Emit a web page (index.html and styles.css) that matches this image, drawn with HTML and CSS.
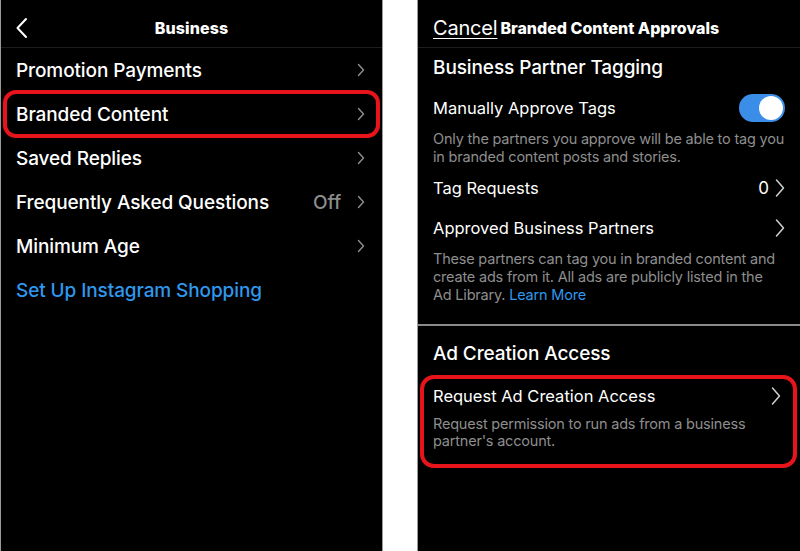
FILE: index.html
```html
<!DOCTYPE html>
<html lang="en">
<head>
  <meta charset="UTF-8">
  <title>Business / Branded Content Approvals</title>
  <link rel="stylesheet" href="styles.css">
</head>
<body>
  <div class="screens">
    <!-- Business settings -->
    <div class="phone">
      <div class="topbar">
        <svg class="back" width="14" height="22" viewBox="0 0 14 22"><path d="M11 2 L2.5 11 L11 20" fill="none" stroke="#fff" stroke-width="2" stroke-linecap="round" stroke-linejoin="round"/></svg>
        <span class="title">Business</span>
      </div>
      <div class="menu">
        <div class="menu-item"><span>Promotion Payments</span><svg class="chev" width="8" height="14" viewBox="0 0 8 14"><path d="M1.5 1.5 L6.5 7 L1.5 12.5"/></svg></div>
        <div class="menu-item highlight"><span>Branded Content</span><svg class="chev" width="8" height="14" viewBox="0 0 8 14"><path d="M1.5 1.5 L6.5 7 L1.5 12.5"/></svg></div>
        <div class="menu-item"><span>Saved Replies</span><svg class="chev" width="8" height="14" viewBox="0 0 8 14"><path d="M1.5 1.5 L6.5 7 L1.5 12.5"/></svg></div>
        <div class="menu-item"><span>Frequently Asked Questions</span><span class="right"><span class="value">Off</span><svg class="chev" width="8" height="14" viewBox="0 0 8 14"><path d="M1.5 1.5 L6.5 7 L1.5 12.5"/></svg></span></div>
        <div class="menu-item"><span>Minimum Age</span><svg class="chev" width="8" height="14" viewBox="0 0 8 14"><path d="M1.5 1.5 L6.5 7 L1.5 12.5"/></svg></div>
        <div class="menu-item link">Set Up Instagram Shopping</div>
      </div>
    </div>

    <!-- Branded content approvals -->
    <div class="phone">
      <div class="topbar left">
        <span class="cancel">Cancel</span>
        <span class="title small">Branded Content Approvals</span>
      </div>
      <div class="section">
        <h2>Business Partner Tagging</h2>
        <div class="row">
          <span>Manually Approve Tags</span>
          <span class="toggle"><span class="knob"></span></span>
        </div>
        <p class="hint">Only the partners you approve will be able to tag you in branded content posts and stories.</p>
        <div class="row">
          <span>Tag Requests</span>
          <span class="right"><span class="count">0</span><svg class="chev big" width="10" height="20" viewBox="0 0 10 20"><path d="M1.5 2 L8.5 10 L1.5 18"/></svg></span>
        </div>
        <div class="row">
          <span>Approved Business Partners</span>
          <svg class="chev big" width="10" height="20" viewBox="0 0 10 20"><path d="M1.5 2 L8.5 10 L1.5 18"/></svg>
        </div>
        <p class="hint last">These partners can tag you in branded content and create ads from it. All ads are publicly listed in the Ad Library. <span class="blue">Learn More</span></p>
      </div>
      <div class="section second">
        <h2>Ad Creation Access</h2>
        <div class="boxed">
          <div class="row short">
            <span>Request Ad Creation Access</span>
            <svg class="chev big" width="10" height="20" viewBox="0 0 10 20"><path d="M1.5 2 L8.5 10 L1.5 18"/></svg>
          </div>
          <p class="hint">Request permission to run ads from a business partner's account.</p>
        </div>
      </div>
    </div>
  </div>
</body>
</html>
```

FILE: styles.css
```css
* {
  box-sizing: border-box;
}

body {
  margin: 0;
  background: #fff;
  font-family: Inter, "Liberation Sans", Arial, sans-serif;
  color: #fff;
}

.screens {
  display: flex;
  justify-content: space-between;
  height: 551px;
}

.phone {
  width: 383px;
  background: #000;
  border-left: 1px solid #9a9a9a;
  border-right: 1px solid #9a9a9a;
}

.phone:last-child {
  width: 383px;
  border-right: none;
}

/* top bar */
.topbar {
  height: 48px;
  padding-top: 8px;
  border-bottom: 1px solid #1c1c1c;
  display: flex;
  align-items: center;
  justify-content: center;
  position: relative;
}

.topbar .back {
  position: absolute;
  left: 14px;
  top: 17px;
}

.title {
  font-weight: 800;
  font-size: 16px;
  letter-spacing: 0.1px;
}

.topbar.left {
  justify-content: flex-start;
  padding-left: 15px;
  gap: 3px;
}

.cancel {
  font-size: 20px;
  text-decoration: underline;
  text-underline-offset: 3px;
  text-decoration-thickness: 1px;
  letter-spacing: -0.2px;
}

.title.small {
  font-size: 16px;
  letter-spacing: 0;
}

/* chevrons */
.chev {
  fill: none;
  stroke: #8f8f8f;
  stroke-width: 1.4;
  stroke-linecap: round;
  stroke-linejoin: round;
}

.chev.big {
  stroke: #cfcfcf;
  stroke-width: 1.5;
}

/* left menu */
.menu-item {
  height: 44px;
  padding: 0 17px 0 15px;
  display: flex;
  align-items: center;
  justify-content: space-between;
  font-size: 19px;
  font-weight: 500;
  letter-spacing: -0.1px;
}

.menu-item.highlight {
  border: 4px solid #e8141b;
  border-radius: 13px;
  margin: -2px 2px;
  padding: 0 11px 0 9px;
  height: 48px;
}

.menu-item.link {
  color: #2f98ee;
}

.right {
  display: flex;
  align-items: center;
  gap: 16px;
}

.value {
  color: #8c8c8c;
}

/* right screen */
.section {
  padding: 8px 15px 0;
}

.section h2 {
  margin: 0 0 8px;
  font-size: 19px;
  line-height: 24px;
  font-weight: 500;
  letter-spacing: -0.1px;
}

.row {
  display: flex;
  align-items: center;
  justify-content: space-between;
  font-size: 16.5px;
  height: 40px;
}

.row.short {
  height: 30px;
}

.toggle {
  width: 46px;
  height: 28px;
  border-radius: 14px;
  background: #3b8ee8;
  position: relative;
}

.knob {
  position: absolute;
  right: 2px;
  top: 2px;
  width: 24px;
  height: 24px;
  border-radius: 50%;
  background: #fff;
}

.hint {
  margin: 2px 0;
  font-size: 14.5px;
  line-height: 18px;
  letter-spacing: -0.2px;
  color: #8e8e8e;
}

.hint.last {
  margin-bottom: 20px;
}

.blue {
  color: #2f98ee;
}

.right .count {
  font-size: 17px;
  margin-right: -10px;
}

.section.second {
  border-top: 2px solid #8a8a8a;
  padding-top: 16px;
}

.section.second h2 {
  margin-bottom: 9px;
}

.boxed {
  height: 93px;
  margin: 0 -12px 0 -13px;
  padding: 2px 12px 0 9px;
  border: 4px solid #e8141b;
  border-radius: 14px;
}

.boxed .hint {
  margin-top: 4px;
  line-height: 17px;
}
```
